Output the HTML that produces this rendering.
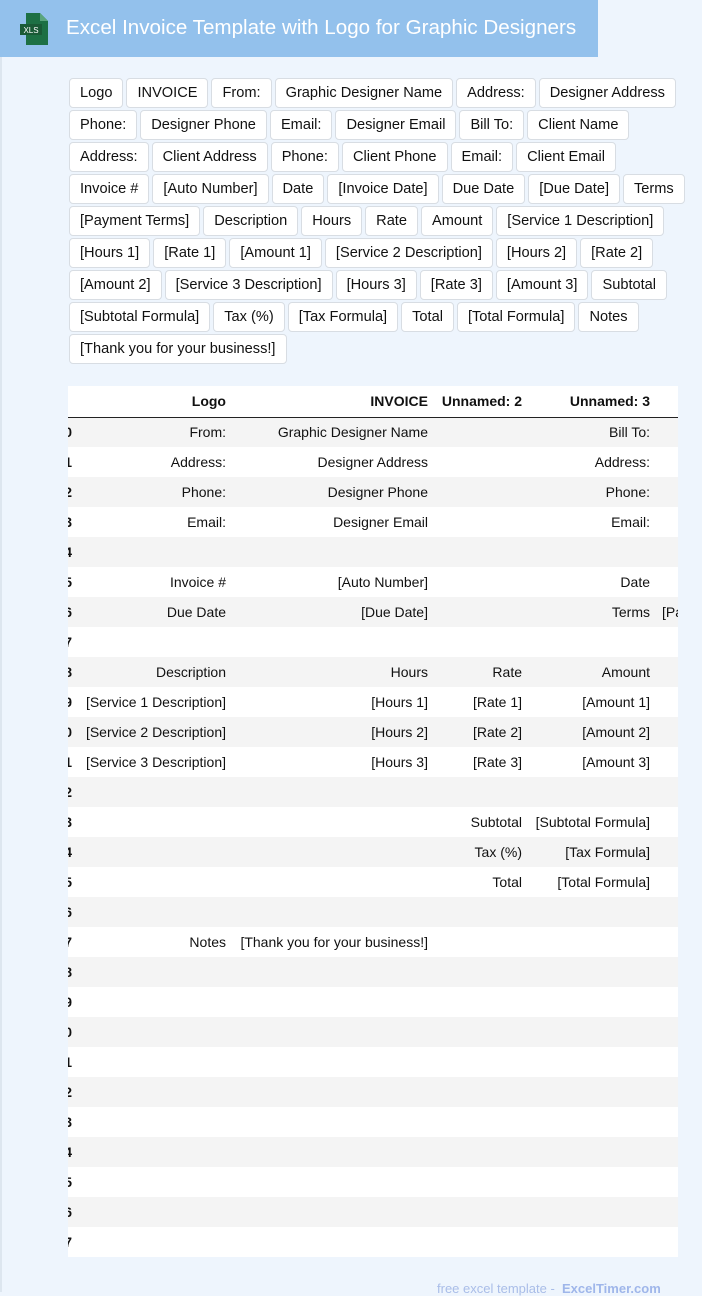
<!DOCTYPE html>
<html><head><meta charset="utf-8"><style>
*{box-sizing:border-box;margin:0;padding:0}
body{width:702px;height:1292px;overflow:hidden;background:#eef5fd;font-family:"Liberation Sans",Arial,sans-serif;position:relative}
.lb{position:absolute;left:0;top:0;width:2px;height:1292px;background:#dde6ef}
.hdr{position:absolute;left:0;top:0;width:598px;height:57px;background:#93c1ec}
.hdr h1{position:absolute;left:66px;top:16px;color:#fff;font-size:20.6px;font-weight:normal;white-space:nowrap}
.icon{position:absolute;left:16px;top:13px}
.tags{position:absolute;left:69px;top:78px;width:618px;display:flex;flex-wrap:wrap;gap:2px 3px}
.tags span{display:inline-block;height:30px;line-height:28px;padding:0 10px;background:#fff;border:1px solid #d8dde3;border-radius:4px;font-size:14.6px;color:#111;white-space:nowrap}
.wrap{position:absolute;left:68px;top:386px;width:610px;height:871px;overflow:hidden;background:#fff}
table{position:absolute;left:-20px;top:0;width:728px;border-collapse:collapse;table-layout:fixed;font-size:14px;color:#111}
td,th{height:30px;padding:0 6px;text-align:right;white-space:nowrap;overflow:visible}
th{font-weight:bold;border-bottom:1.5px solid #222;height:31px}
td.i{font-weight:bold}
tr:nth-child(even) td{background:#f4f4f4}
.foot{position:absolute;left:437px;top:1281px;color:#a9bde8;font-size:13px;white-space:nowrap}
.foot b{color:#9fb6ea}
</style></head><body>
<div class="lb"></div>
<div class="hdr">
<svg class="icon" width="36" height="32" viewBox="0 0 36 32"><path d="M10 0h14l8 8v24H10z" fill="#1d7044"/><path d="M24 0v8h8z" fill="#5aa57c"/><rect x="4" y="11" width="22" height="11" fill="#1a5a36"/><text x="15" y="20" font-size="8" fill="#fff" text-anchor="middle" font-family="Liberation Sans">XLS</text></svg>
<h1>Excel Invoice Template with Logo for Graphic Designers</h1>
</div>
<div class="tags">
<span>Logo</span><span>INVOICE</span><span>From:</span><span>Graphic Designer Name</span><span>Address:</span><span>Designer Address</span>
<span>Phone:</span><span>Designer Phone</span><span>Email:</span><span>Designer Email</span><span>Bill To:</span><span>Client Name</span>
<span>Address:</span><span>Client Address</span><span>Phone:</span><span>Client Phone</span><span>Email:</span><span>Client Email</span>
<span>Invoice #</span><span>[Auto Number]</span><span>Date</span><span>[Invoice Date]</span><span>Due Date</span><span>[Due Date]</span><span>Terms</span>
<span>[Payment Terms]</span><span>Description</span><span>Hours</span><span>Rate</span><span>Amount</span><span>[Service 1 Description]</span>
<span>[Hours 1]</span><span>[Rate 1]</span><span>[Amount 1]</span><span>[Service 2 Description]</span><span>[Hours 2]</span><span>[Rate 2]</span>
<span>[Amount 2]</span><span>[Service 3 Description]</span><span>[Hours 3]</span><span>[Rate 3]</span><span>[Amount 3]</span><span>Subtotal</span>
<span>[Subtotal Formula]</span><span>Tax (%)</span><span>[Tax Formula]</span><span>Total</span><span>[Total Formula]</span><span>Notes</span>
<span>[Thank you for your business!]</span>
</div>
<div class="wrap"><table>
<colgroup><col style="width:30px"><col style="width:154px"><col style="width:202px"><col style="width:94px"><col style="width:128px"><col style="width:120px"></colgroup>
<tr><th></th><th>Logo</th><th>INVOICE</th><th>Unnamed: 2</th><th>Unnamed: 3</th><th>Unnamed: 4</th></tr>
<tr><td class="i">0</td><td>From:</td><td>Graphic Designer Name</td><td></td><td>Bill To:</td><td></td></tr>
<tr><td class="i">1</td><td>Address:</td><td>Designer Address</td><td></td><td>Address:</td><td></td></tr>
<tr><td class="i">2</td><td>Phone:</td><td>Designer Phone</td><td></td><td>Phone:</td><td></td></tr>
<tr><td class="i">3</td><td>Email:</td><td>Designer Email</td><td></td><td>Email:</td><td></td></tr>
<tr><td class="i">4</td><td></td><td></td><td></td><td></td><td></td></tr>
<tr><td class="i">5</td><td>Invoice #</td><td>[Auto Number]</td><td></td><td>Date</td><td></td></tr>
<tr><td class="i">6</td><td>Due Date</td><td>[Due Date]</td><td></td><td>Terms</td><td style="text-align:left">[Payment Terms]</td></tr>
<tr><td class="i">7</td><td></td><td></td><td></td><td></td><td></td></tr>
<tr><td class="i">8</td><td>Description</td><td>Hours</td><td>Rate</td><td>Amount</td><td></td></tr>
<tr><td class="i">9</td><td>[Service 1 Description]</td><td>[Hours 1]</td><td>[Rate 1]</td><td>[Amount 1]</td><td></td></tr>
<tr><td class="i">10</td><td>[Service 2 Description]</td><td>[Hours 2]</td><td>[Rate 2]</td><td>[Amount 2]</td><td></td></tr>
<tr><td class="i">11</td><td>[Service 3 Description]</td><td>[Hours 3]</td><td>[Rate 3]</td><td>[Amount 3]</td><td></td></tr>
<tr><td class="i">12</td><td></td><td></td><td></td><td></td><td></td></tr>
<tr><td class="i">13</td><td></td><td></td><td>Subtotal</td><td>[Subtotal Formula]</td><td></td></tr>
<tr><td class="i">14</td><td></td><td></td><td>Tax (%)</td><td>[Tax Formula]</td><td></td></tr>
<tr><td class="i">15</td><td></td><td></td><td>Total</td><td>[Total Formula]</td><td></td></tr>
<tr><td class="i">16</td><td></td><td></td><td></td><td></td><td></td></tr>
<tr><td class="i">17</td><td>Notes</td><td>[Thank you for your business!]</td><td></td><td></td><td></td></tr>
<tr><td class="i">18</td><td></td><td></td><td></td><td></td><td></td></tr>
<tr><td class="i">19</td><td></td><td></td><td></td><td></td><td></td></tr>
<tr><td class="i">20</td><td></td><td></td><td></td><td></td><td></td></tr>
<tr><td class="i">21</td><td></td><td></td><td></td><td></td><td></td></tr>
<tr><td class="i">22</td><td></td><td></td><td></td><td></td><td></td></tr>
<tr><td class="i">23</td><td></td><td></td><td></td><td></td><td></td></tr>
<tr><td class="i">24</td><td></td><td></td><td></td><td></td><td></td></tr>
<tr><td class="i">25</td><td></td><td></td><td></td><td></td><td></td></tr>
<tr><td class="i">26</td><td></td><td></td><td></td><td></td><td></td></tr>
<tr><td class="i">27</td><td></td><td></td><td></td><td></td><td></td></tr>
</table></div>
<div class="foot">free excel template - &nbsp;<b>ExcelTimer.com</b></div>
</body></html>
